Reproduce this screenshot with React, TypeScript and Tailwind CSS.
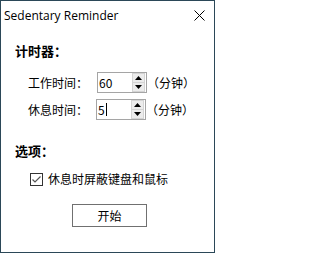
import { useState } from "react";

const FONT = { fontFamily: '"Noto Sans CJK SC", "Noto Sans", sans-serif' };

/** 带上下箭头的数字输入框（Win32 风格）。 */
function Spin({ value, caret }: { value: string; caret?: boolean }) {
  return (
    <div className="flex h-[21px] w-[50px] items-stretch border border-[#a5a5a5] bg-white">
      <div className="flex flex-1 items-center pl-[1px] text-[12px] leading-none text-black">
        {value}
        {caret && <span className="ml-[1px] inline-block h-[13px] w-[1px] bg-black" />}
      </div>
      <div className="my-[0px] mr-[1px] flex w-[13px] flex-col border border-[#d4d4d4] bg-[#ececec]">
        <div className="flex flex-1 items-center justify-center border-b border-[#d4d4d4]">
          <svg width="7" height="4" viewBox="0 0 7 4">
            <path d="M3.5 0 L7 4 L0 4 Z" fill="#000" />
          </svg>
        </div>
        <div className="flex flex-1 items-center justify-center">
          <svg width="7" height="4" viewBox="0 0 7 4">
            <path d="M0 0 L7 0 L3.5 4 Z" fill="#000" />
          </svg>
        </div>
      </div>
    </div>
  );
}

export default function App() {
  const [block, setBlock] = useState(true);

  return (
    <div
      className="flex h-[253px] w-[215px] flex-col border border-[#2b4858] bg-white text-black"
      style={FONT}
    >
      {/* 标题栏 */}
      <div className="flex h-[29px] items-center justify-between pl-[3px] pr-[9px]">
        <span className="text-[12px] leading-none" style={{ fontFamily: '"Open Sans", "Noto Sans", sans-serif' }}>
          Sedentary Reminder
        </span>
        <svg width="11" height="11" viewBox="0 0 11 11">
          <path d="M0.5 0.5 L10.5 10.5 M10.5 0.5 L0.5 10.5" stroke="#000" strokeWidth="1" />
        </svg>
      </div>

      <div className="flex flex-col pl-[14px]">
        <div className="mt-[11px] h-[20px] text-[13px] font-bold leading-[20px]">计时器：</div>

        <div className="mt-[11px] flex h-[21px] items-center pl-[13px]">
          <span className="w-[69px] text-[12px] leading-none">工作时间：</span>
          <Spin value="60" />
          <span className="text-[12px] leading-none">（分钟）</span>
        </div>

        <div className="mt-[6px] flex h-[21px] items-center pl-[13px]">
          <span className="w-[68px] text-[12px] leading-none">休息时间：</span>
          <Spin value="5" caret />
          <span className="text-[12px] leading-none">（分钟）</span>
        </div>

        <div className="mt-[21px] h-[20px] text-[13px] font-bold leading-[20px]">选项：</div>

        <label className="mt-[10px] flex h-[16px] items-center pl-[15px]" onClick={() => setBlock(!block)}>
          <span className="flex h-[13px] w-[13px] items-center justify-center border border-[#333333] bg-white">
            {block && (
              <svg width="9" height="7" viewBox="0 0 9 7">
                <path d="M0.5 3.5 L3 6 L8.5 0.5" stroke="#555" strokeWidth="1.2" fill="none" />
              </svg>
            )}
          </span>
          <span className="ml-[5px] text-[12px] leading-none">休息时屏蔽键盘和鼠标</span>
        </label>

        <button
          type="button"
          className="ml-[57px] mt-[17px] h-[23px] w-[75px] border border-[#707070] bg-white text-[12px] leading-none"
        >
          开始
        </button>
      </div>
    </div>
  );
}
